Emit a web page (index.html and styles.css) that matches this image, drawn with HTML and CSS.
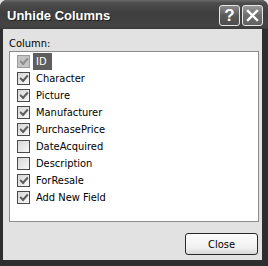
FILE: index.html
```html
<!DOCTYPE html>
<html>
<head>
  <meta charset="UTF-8">
  <title>Unhide Columns</title>
  <link rel="stylesheet" href="styles.css">
</head>
<body>
  <div class="window">
    <div class="titlebar">
      <span class="title">Unhide Columns</span>
      <div class="title-buttons">
        <span class="tbtn help">?</span>
        <span class="tbtn close">
          <svg width="13" height="13" viewBox="0 0 13 13">
            <path d="M2 2 L11 11 M11 2 L2 11" stroke="#fff" stroke-width="2.4" stroke-linecap="square" fill="none"/>
          </svg>
        </span>
      </div>
    </div>

    <div class="dialog">
      <div class="label">Column:</div>
      <ul class="list">
        <li class="row"><span class="check disabled"></span><span class="name selected">ID</span></li>
        <li class="row"><span class="check on"></span><span class="name">Character</span></li>
        <li class="row"><span class="check on"></span><span class="name">Picture</span></li>
        <li class="row"><span class="check on"></span><span class="name">Manufacturer</span></li>
        <li class="row"><span class="check on"></span><span class="name">PurchasePrice</span></li>
        <li class="row"><span class="check"></span><span class="name">DateAcquired</span></li>
        <li class="row"><span class="check"></span><span class="name">Description</span></li>
        <li class="row"><span class="check on"></span><span class="name">ForResale</span></li>
        <li class="row"><span class="check on"></span><span class="name">Add New Field</span></li>
      </ul>
      <div class="footer">
        <button class="btn">Close</button>
      </div>
    </div>
  </div>
</body>
</html>
```

FILE: styles.css
```css
body {
  margin: 0;
  background: #e2e2e2;
  font-family: "DejaVu Sans Condensed", "DejaVu Sans", sans-serif;
  font-size: 11px;
  color: #000;
}
.window {
  width: 268px;
  height: 266px;
  box-sizing: border-box;
  background: #2e2e2e;
  border-radius: 7px 7px 0 0;
  padding: 0 6px 6px 3px;
  display: flex;
  flex-direction: column;
}
.titlebar {
  height: 29px;
  margin: 0 -6px 0 -3px;
  padding: 0 5px 0 7px;
  border-radius: 7px 7px 0 0;
  background: linear-gradient(#6a6a6a 0, #4c4c4c 3px, #3e3e3e 14px, #444 26px, #3a3a3a 29px);
  display: flex;
  align-items: center;
  justify-content: space-between;
}
.title {
  font-family: "Liberation Sans", Arial, sans-serif;
  font-weight: bold;
  font-size: 13px;
  color: #fff;
  text-shadow: 1px 1px 0 #1e1e1e;
  margin-top: 1px;
}
.title-buttons {
  display: flex;
  gap: 2px;
  margin-top: 2px;
}
.tbtn {
  width: 21px;
  height: 21px;
  box-sizing: border-box;
  border: 1px solid #e6e6e6;
  border-radius: 3px;
  background: linear-gradient(#8a8a8a, #5a5a5a 50%, #4e4e4e);
  color: #fff;
  display: flex;
  align-items: center;
  justify-content: center;
}
.help {
  font-family: "Liberation Sans", Arial, sans-serif;
  font-weight: bold;
  font-size: 17px;
}
.close {
  background: linear-gradient(#9a9a9a, #6e6e6e 50%, #626262);
}
.dialog {
  flex: 1;
  background: #e2e2e2;
  padding: 8px 3px 5px 6px;
  display: flex;
  flex-direction: column;
}
.label {
  line-height: 13px;
  margin-bottom: 1px;
}
.list {
  list-style: none;
  margin: 0;
  padding: 1px 0 0 0;
  height: 171px;
  box-sizing: border-box;
  border: 1px solid #8c8c8c;
  background: #fff;
}
.row {
  height: 17px;
  display: flex;
  align-items: center;
  padding-left: 7px;
}
.check {
  width: 13px;
  height: 13px;
  box-sizing: border-box;
  border: 1px solid #4a4a4a;
  background: linear-gradient(135deg, #d6d6d6, #f8f8f8);
  margin-right: 3px;
  display: flex;
  align-items: center;
  justify-content: center;
}
.check.on::after,
.check.disabled::after {
  content: "";
  width: 6px;
  height: 3px;
  border-left: 2px solid #5e5e5e;
  border-bottom: 2px solid #5e5e5e;
  transform: rotate(-48deg);
  margin-top: -2px;
}
.check.disabled {
  border-color: #9c9c9c;
  background: #c4c4c4;
}
.check.disabled::after {
  border-color: #8e8e8e;
}
.name {
  padding: 0 5px 0 3px;
  line-height: 17px;
}
.name.selected {
  background: #5e5e5e;
  color: #fff;
}
.footer {
  flex: 1;
  display: flex;
  justify-content: flex-end;
  align-items: flex-end;
  padding-right: 1px;
}
.btn {
  width: 73px;
  height: 22px;
  border: 1px solid #2a2a2a;
  border-radius: 3px;
  background: linear-gradient(#fcfcfc, #f0f0f0 70%, #d8d8d8);
  font-family: "DejaVu Sans Condensed", "DejaVu Sans", sans-serif;
  font-size: 11px;
  color: #000;
  padding: 0;
}
```
